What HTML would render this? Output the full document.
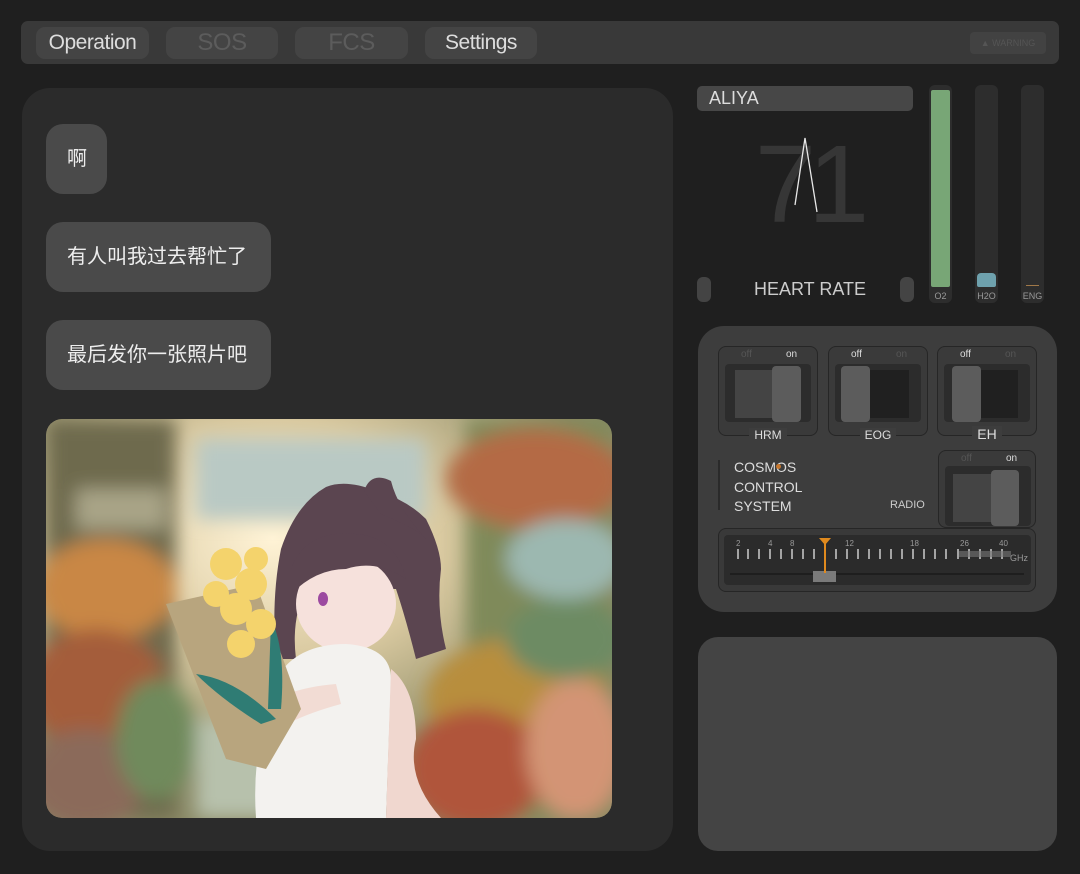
<!DOCTYPE html>
<html><head><meta charset="utf-8"><style>
*{margin:0;padding:0;box-sizing:border-box}
body{width:1080px;height:874px;background:#1f1f1f;position:relative;overflow:hidden;font-family:"Liberation Sans","Noto Sans CJK SC",sans-serif}
.a{position:absolute}
.tb{left:21px;top:21px;width:1038px;height:43px;background:#393939;border-radius:7px}
.btn{top:27px;height:32px;background:#444;border-radius:9px;color:#ddd;font-size:21px;text-align:center;line-height:31px;letter-spacing:-0.5px}
.dim{color:#5c5c5c;font-size:24px}
.left{left:22px;top:88px;width:651px;height:763px;background:#2b2b2b;border-radius:28px}
.bub{left:46px;background:#4a4a4a;border-radius:17px;color:#eee;font-size:20px;line-height:70px;height:70px;padding:0 21px}
.bar{width:23px;top:85px;height:218px;background:#2d2d2d;border-radius:6px}
.lab{font-size:9px;color:#999;text-align:center;width:100%;bottom:2px}
.cp{left:698px;top:326px;width:359px;height:286px;background:#3d3d3d;border-radius:26px}
.sw{width:100px;height:90px;border:1px solid #262626;border-radius:8px;background:#3a3a3a}
.sw .t{top:2px;font-size:10px;color:#555}
.in{left:6px;top:17px;width:86px;height:58px;background:#2c2c2c;border-radius:4px}
.sw .n{font-size:12px;color:#ddd;bottom:-7px;left:0;width:100%;text-align:center}
.sw .n span{background:#3d3d3d;padding:0 5px}
</style></head><body>
<div class="a tb"></div>
<div class="a btn" style="left:36px;width:113px">Operation</div>
<div class="a btn dim" style="left:166px;width:112px">SOS</div>
<div class="a btn dim" style="left:295px;width:113px">FCS</div>
<div class="a btn" style="left:425px;width:112px">Settings</div>
<div class="a" style="left:970px;top:32px;width:76px;height:22px;background:#424242;border-radius:4px;color:#555;font-size:9px;line-height:22px;text-align:center">▲ WARNING</div>

<div class="a left"></div>
<div class="a bub" style="top:124px;width:61px">啊</div>
<div class="a bub" style="top:222px;width:225px">有人叫我过去帮忙了</div>
<div class="a bub" style="top:320px;width:225px">最后发你一张照片吧</div>

<svg class="a" style="left:46px;top:419px;border-radius:16px" width="566" height="399" viewBox="0 0 566 399">
<defs>
<filter id="b" x="-20%" y="-20%" width="140%" height="140%"><feGaussianBlur stdDeviation="9"/></filter>
<clipPath id="c"><rect width="566" height="399" rx="16"/></clipPath>
<radialGradient id="sun" cx="0.4" cy="0.3" r="0.6"><stop offset="0" stop-color="#fff3d6"/><stop offset="0.5" stop-color="#d9c9a0"/><stop offset="1" stop-color="#8b8a66"/></radialGradient>
</defs>
<g clip-path="url(#c)">
<rect width="566" height="399" fill="url(#sun)"/>
<g filter="url(#b)">
<rect x="0" y="0" width="130" height="399" fill="#6e6a4e"/>
<rect x="150" y="20" width="230" height="80" fill="#b9c9c4"/>
<rect x="30" y="70" width="90" height="40" fill="#a9a487"/>
<ellipse cx="60" cy="170" rx="70" ry="50" fill="#c98744"/>
<ellipse cx="50" cy="270" rx="70" ry="60" fill="#a45d3a"/>
<ellipse cx="40" cy="360" rx="60" ry="50" fill="#8b6a5a"/>
<ellipse cx="110" cy="320" rx="40" ry="60" fill="#6f8a5c"/>
<rect x="420" y="0" width="146" height="399" fill="#7f8a5a"/>
<ellipse cx="490" cy="60" rx="90" ry="50" fill="#b46a45"/>
<ellipse cx="520" cy="140" rx="60" ry="40" fill="#9cb8b0"/>
<ellipse cx="470" cy="280" rx="90" ry="60" fill="#b88e3c"/>
<ellipse cx="430" cy="350" rx="70" ry="60" fill="#b0553a"/>
<ellipse cx="530" cy="330" rx="50" ry="70" fill="#d39474"/>
<ellipse cx="520" cy="220" rx="60" ry="40" fill="#6d8b64"/>
<rect x="150" y="300" width="120" height="99" fill="#b7c1ac"/>
</g>
<path d="M280 68 Q300 60 330 72 Q360 80 380 100 Q395 130 395 150 Q390 190 400 230 L370 240 Q360 200 350 170 L260 170 Q245 200 250 240 L230 240 Q225 180 235 130 Q250 85 280 68Z" fill="#5b4550"/>
<path d="M318 72 Q325 52 345 62 Q352 90 380 120 Q372 110 335 95Z" fill="#5b4550"/>
<ellipse cx="300" cy="185" rx="50" ry="48" fill="#f6e1dc"/>
<path d="M245 150 Q260 110 310 115 Q350 118 360 160 Q330 140 300 150 Q270 150 245 175Z" fill="#5b4550"/>
<path d="M230 260 Q250 225 300 225 Q345 228 345 260 L340 399 L210 399 Q205 330 230 260Z" fill="#f3f2ef"/>
<path d="M345 250 Q370 270 370 320 Q360 360 395 399 L340 399Z" fill="#f0d7cf"/>
<path d="M200 300 Q230 270 290 265 L295 285 Q240 300 220 320Z" fill="#f2dcd4"/>
<path d="M120 185 L210 165 L255 290 L220 350 L180 340Z" fill="#b8a57e"/>
<path d="M150 255 Q190 260 230 300 L215 305 Q175 280 150 255Z" fill="#2f7c74"/>
<path d="M225 200 Q240 230 235 290 L222 290Z" fill="#2f7c74"/>
<g fill="#f4d36c">
<circle cx="180" cy="145" r="16"/><circle cx="205" cy="165" r="16"/><circle cx="190" cy="190" r="16"/><circle cx="215" cy="205" r="15"/><circle cx="195" cy="225" r="14"/><circle cx="170" cy="175" r="13"/><circle cx="210" cy="140" r="12"/>
</g>
<ellipse cx="277" cy="180" rx="5" ry="7" fill="#9c4aa0"/>
</g>
</svg>

<div class="a" style="left:697px;top:86px;width:216px;height:25px;background:#474747;border-radius:5px;color:#ddd;font-size:18px;line-height:25px;padding-left:12px">ALIYA</div>
<div class="a" style="left:753px;top:130px;width:110px;text-align:center;font-size:110px;color:#363636;line-height:110px;letter-spacing:-8px">71</div>
<svg class="a" style="left:790px;top:130px" width="40" height="90"><polyline points="5,75 15,8 27,82" fill="none" stroke="#e8e8e8" stroke-width="1.3"/></svg>
<div class="a" style="left:697px;top:277px;width:14px;height:25px;background:#444;border-radius:6px"></div>
<div class="a" style="left:900px;top:277px;width:14px;height:25px;background:#444;border-radius:6px"></div>
<div class="a" style="left:740px;top:279px;width:140px;text-align:center;color:#ccc;font-size:18px">HEART RATE</div>

<div class="a bar" style="left:929px"><div class="a" style="left:2px;top:5px;width:19px;height:197px;background:#78a676;border-radius:2px"></div><div class="a lab">O2</div></div>
<div class="a bar" style="left:975px"><div class="a" style="left:2px;top:188px;width:19px;height:14px;background:#6ea1ad;border-radius:4px 4px 2px 2px"></div><div class="a lab">H2O</div></div>
<div class="a bar" style="left:1021px"><div class="a" style="left:5px;top:200px;width:13px;height:1px;background:#a07848"></div><div class="a lab">ENG</div></div>

<div class="a cp"></div>
<div class="a sw" style="left:718px;top:346px"><div class="a t" style="left:22px">off</div><div class="a t" style="left:67px;color:#ddd">on</div><div class="a in"><div class="a" style="left:10px;top:6px;width:40px;height:48px;background:#444"></div><div class="a" style="left:47px;top:2px;width:29px;height:56px;background:#5c5c5c;border-radius:4px"></div></div><div class="a n"><span>HRM</span></div></div>
<div class="a sw" style="left:828px;top:346px"><div class="a t" style="left:22px;color:#ddd">off</div><div class="a t" style="left:67px">on</div><div class="a in"><div class="a" style="left:30px;top:6px;width:44px;height:48px;background:#202020"></div><div class="a" style="left:6px;top:2px;width:29px;height:56px;background:#5c5c5c;border-radius:4px"></div></div><div class="a n"><span>EOG</span></div></div>
<div class="a sw" style="left:937px;top:346px"><div class="a t" style="left:22px;color:#ddd">off</div><div class="a t" style="left:67px">on</div><div class="a in"><div class="a" style="left:30px;top:6px;width:44px;height:48px;background:#202020"></div><div class="a" style="left:8px;top:2px;width:29px;height:56px;background:#5c5c5c;border-radius:4px"></div></div><div class="a n"><span style="font-size:14px">EH</span></div></div>
<div class="a" style="left:718px;top:460px;width:2px;height:50px;background:#2a2a2a"></div>
<div class="a" style="left:734px;top:458px;color:#ddd;font-size:14px;line-height:19.5px">COSMOS<br>CONTROL<br>SYSTEM</div>
<div class="a" style="left:776px;top:464px;width:5px;height:5px;border-radius:50%;background:#c8782e"></div>
<div class="a" style="left:890px;top:499px;color:#ccc;font-size:11px">RADIO</div>
<div class="a sw" style="left:938px;top:450px;height:78px;width:98px"><div class="a t" style="left:22px">off</div><div class="a t" style="left:67px;color:#ddd">on</div><div class="a in" style="top:15px;height:60px"><div class="a" style="left:8px;top:8px;width:45px;height:48px;background:#444"></div><div class="a" style="left:46px;top:4px;width:28px;height:56px;background:#5c5c5c;border-radius:4px"></div></div></div>
<div class="a" style="left:718px;top:528px;width:318px;height:64px;border:1px solid #262626;border-radius:8px;background:#393939"></div>
<div class="a" style="left:724px;top:535px;width:307px;height:50px;background:#2b2b2b;border-radius:4px"></div>
<svg class="a" style="left:724px;top:535px" width="307" height="50">
<g fill="#999" font-size="8" font-family="Liberation Sans">
<text x="12" y="11">2</text><text x="44" y="11">4</text><text x="66" y="11">8</text><text x="121" y="11">12</text><text x="186" y="11">18</text><text x="236" y="11">26</text><text x="275" y="11">40</text><text x="286" y="26" font-size="9">GHz</text>
</g>
<g stroke="#ccc" stroke-width="1.5">
<path d="M14 14v10M24 14v10M35 14v10M46 14v10M57 14v10M68 14v10M79 14v10M90 14v10M101 14v10M112 14v10M123 14v10M134 14v10M145 14v10M156 14v10M167 14v10M178 14v10M189 14v10M200 14v10M211 14v10M222 14v10M234 14v10M245 14v10M256 14v10M267 14v10M278 14v10"/>
</g>
<rect x="235" y="16" width="52" height="6" fill="#777" opacity="0.6"/>
<path d="M6 39H300" stroke="#1a1a1a" stroke-width="1.5"/>
<rect x="89" y="36" width="23" height="11" fill="#7a7a7a"/>
<path d="M95 3H107L101 10Z M100 8h2v30h-2z" fill="#e08a1e"/>
</svg>

<div class="a" style="left:698px;top:637px;width:359px;height:214px;background:#444;border-radius:20px"></div>
</body></html>
